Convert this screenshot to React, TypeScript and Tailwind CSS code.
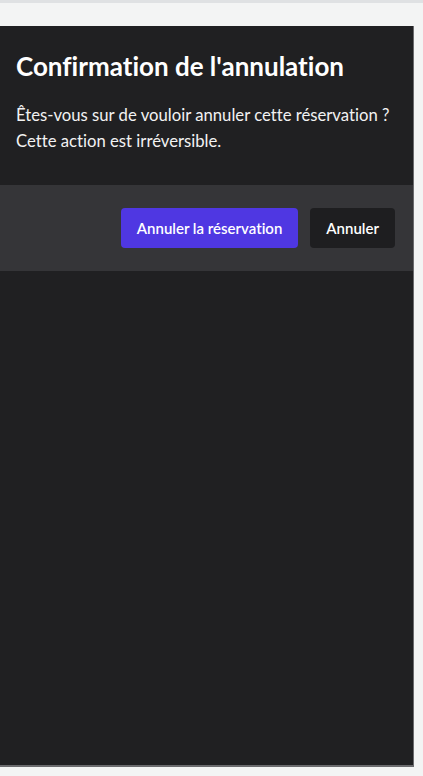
export default function App() {
    return (
        <div className="min-h-[776px] bg-[#f3f4f4] flex flex-col [font-variant-ligatures:none]" style={{fontFamily: 'Lato, "Open Sans", sans-serif'}}>
            {/* top strip */}
            <div className="h-[3px] bg-[#dfe1e3]"/>
            <div className="pt-[23px] pr-[9px] pb-[9px] flex-1 flex">
                <section className="flex-1 bg-[#202022] border-b-[2px] border-r border-[#6b6b6e] flex flex-col">
                    <div className="px-4 pt-6 pb-[31px]">
                        <h1 className="text-[26px] leading-8 font-bold text-white">Confirmation de l'annulation</h1>
                        <p className="mt-5 text-[16.7px] leading-[26px] text-[#f2f2f2]">
                            Êtes-vous sur de vouloir annuler cette réservation ? Cette action est irréversible.
                        </p>
                    </div>
                    <div className="bg-[#353538] flex justify-end gap-3 px-[18px] py-[23px]">
                        <button className="h-10 px-4 rounded bg-[#4f37e2] text-white text-[15px] font-semibold">
                            Annuler la réservation
                        </button>
                        <button className="h-10 px-4 rounded bg-[#1e1e20] text-white text-[15px] font-semibold">
                            Annuler
                        </button>
                    </div>
                </section>
            </div>
        </div>
    );
}
